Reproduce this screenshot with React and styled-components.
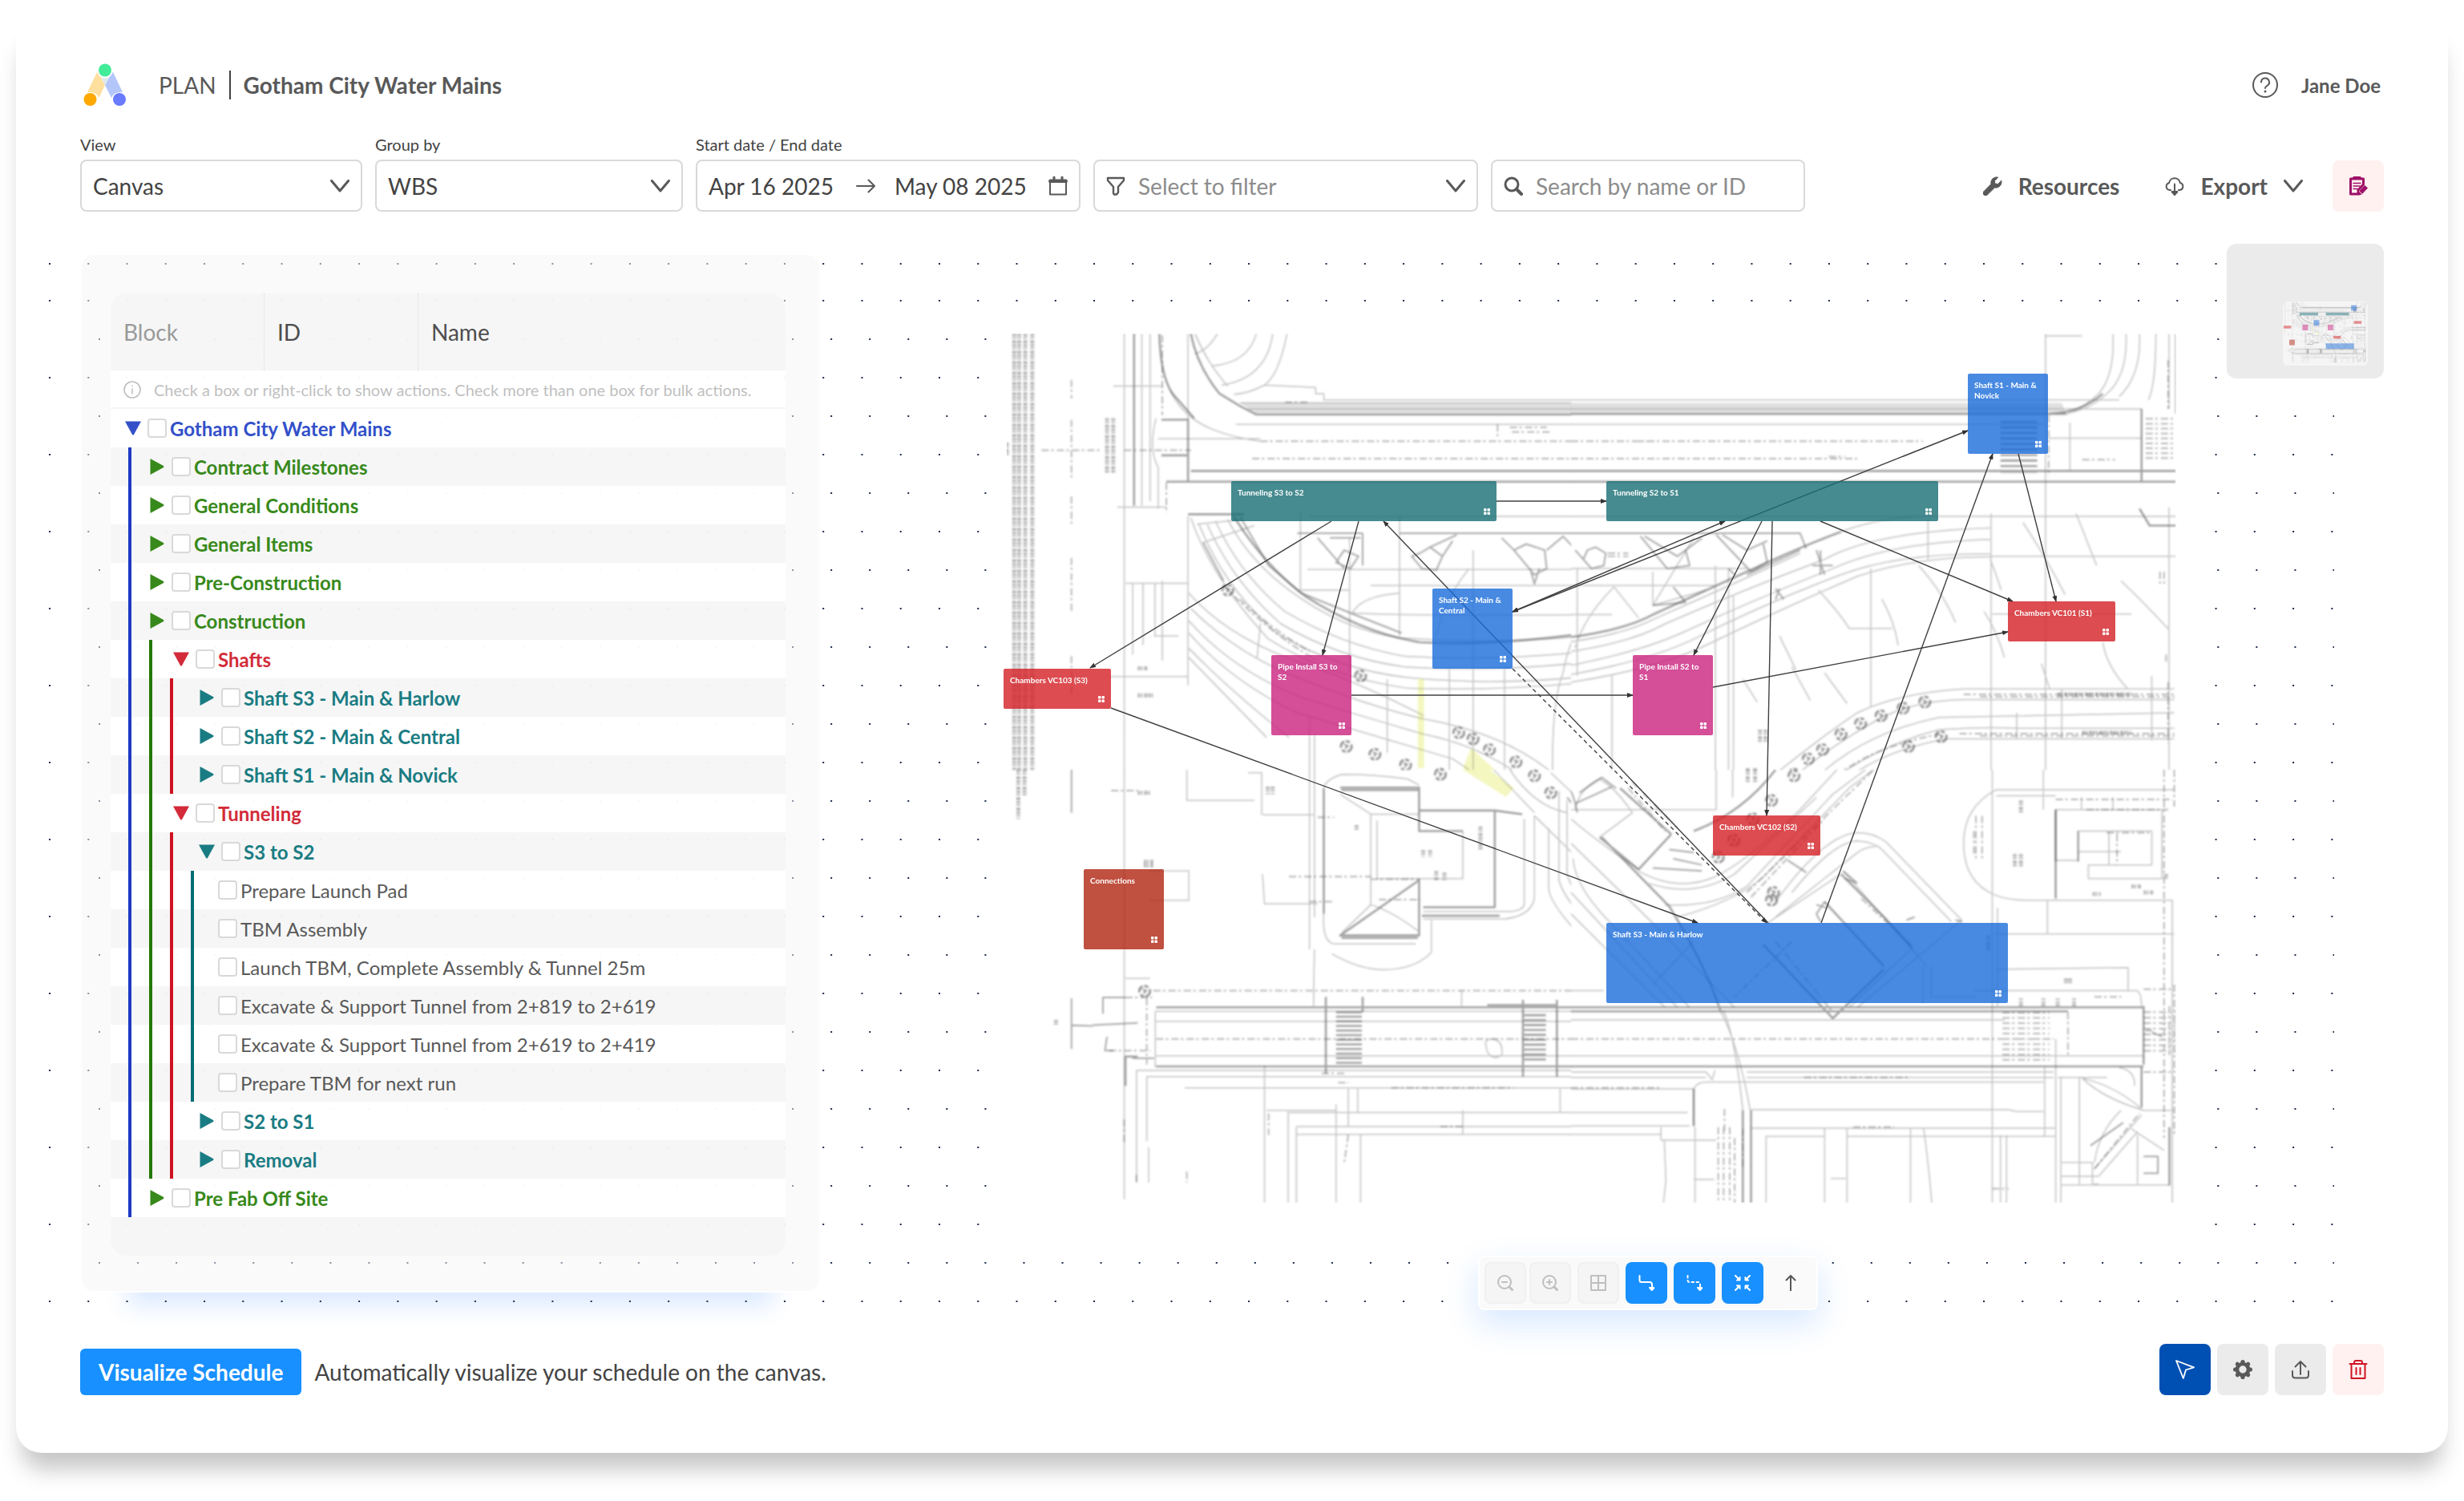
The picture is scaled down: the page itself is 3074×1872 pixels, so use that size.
import React, { useState } from 'react';
import styled, { createGlobalStyle, css } from 'styled-components';

const GlobalStyle = createGlobalStyle`
  * {
    box-sizing: border-box;
  }
  body {
    margin: 0;
    background: #fff;
    color: #434343;
    font-family: Lato, "Open Sans", sans-serif;
  }
  button, input, select {
    font-family: inherit;
    color: inherit;
  }
`;

const Page = styled.div`
  min-height: 100vh;
  padding: 20px 20px 60px;
`;

const Card = styled.main`
  padding: 56px 80px 72px;
  background: #fff;
  border-radius: 32px;
  box-shadow: 0 28px 28px -8px rgba(0, 0, 0, 0.23);
`;

/* ---------- header ---------- */

const Header = styled.header`
  display: flex;
  align-items: center;
  justify-content: space-between;
  height: 60px;
  padding: 0 4px;
`;

const Brand = styled.div`
  display: flex;
  align-items: center;
  color: #595959;
  font-size: 28px;
  line-height: 36px;
`;

const Section = styled.span`
  margin-left: 40px;
  padding-right: 16px;
  border-right: 2px solid #434343;
`;

const ProjectName = styled.h1`
  margin: 0 0 0 16px;
  font-size: inherit;
  font-weight: 700;
`;

const User = styled.div`
  display: flex;
  align-items: center;
  gap: 29px;
  color: #595959;
  font-size: 24px;
  font-weight: 700;
`;

const BareButton = styled.button`
  display: flex;
  padding: 0;
  border: 0;
  background: none;
  cursor: pointer;
`;

/* ---------- filter bar ---------- */

const FilterBar = styled.div`
  display: flex;
  align-items: flex-end;
  gap: 16px;
  margin-top: 32px;
`;

const Field = styled.div`
  flex: 0 1 ${(p) => p.$width}px;
  min-width: 0;
`;

const FieldLabel = styled.label`
  display: block;
  margin-bottom: 7px;
  font-size: 20px;
  line-height: 24px;
`;

const Control = styled.div`
  position: relative;
  display: flex;
  align-items: center;
  gap: 16px;
  height: 65px;
  padding: 0 14px;
  border: 2px solid #d9d9d9;
  border-radius: 8px;
  color: ${(p) => (p.$muted ? '#8c8c8c' : '#434343')};

  svg {
    flex: none;
    color: #595959;
  }
`;

const Select = styled.select`
  flex: 1;
  min-width: 0;
  height: 60px;
  padding: 0;
  border: 0;
  outline: 0;
  appearance: none;
  background: none;
  font-size: 28px;
`;

const TextInput = styled.input`
  flex: ${(p) => (p.$width ? `0 0 ${p.$width}px` : '1')};
  min-width: 0;
  height: 60px;
  padding: 0;
  border: 0;
  outline: 0;
  background: none;
  font-size: 28px;

  &::placeholder {
    color: #8c8c8c;
    opacity: 1;
  }
`;

const RangeArrow = styled.span`
  display: flex;
  margin-right: 8px;
`;

const Actions = styled.div`
  display: flex;
  gap: 17px;
  margin-left: auto;
`;

const GhostButton = styled.button`
  display: flex;
  align-items: center;
  gap: 20px;
  height: 64px;
  padding: 0 20px;
  border: 0;
  background: none;
  color: #595959;
  font-size: 28px;
  font-weight: 700;
  cursor: pointer;
`;

const tones = {
  grey: css`
    background: #ebebeb;
    color: #595959;
  `,
  navy: css`
    background: #0050b3;
    color: #fff;
  `,
  danger: css`
    background: #fff1f0;
    color: #cf1322;
  `,
  plum: css`
    background: #fff1f0;
    color: #9e1068;
  `,
};

const SquareButton = styled.button`
  display: flex;
  align-items: center;
  justify-content: center;
  width: 64px;
  height: 64px;
  padding: 0;
  border: 0;
  border-radius: 8px;
  cursor: pointer;
  ${(p) => tones[p.$tone]}
`;

/* ---------- workspace ---------- */

const Workspace = styled.section`
  position: relative;
  display: flex;
  align-items: flex-start;
  margin-top: 40px;
  padding-bottom: 24px;
`;

const Dots = styled.svg`
  position: absolute;
  top: 0;
  left: -40px;
  width: calc(100% - 22px);
  height: 100%;
`;

const SidePanel = styled.aside`
  position: relative;
  flex: 0 0 924px;
  margin-top: 12px;
  padding: 48px 42px 44px 36px;
  border: 2px solid #fff;
  border-radius: 16px;
  background: rgba(245, 245, 245, 0.5);
  background-clip: padding-box;
  box-shadow: 0 76px 28px -60px rgba(24, 120, 255, 0.16);
`;

const Tree = styled.table`
  width: 100%;
  table-layout: fixed;
  border-spacing: 0;
  overflow: hidden;
  border-radius: 20px;
  background: rgba(255, 255, 255, 0.2);
`;

const HeadCell = styled.th`
  width: ${(p) => (p.$width ? `${p.$width}px` : 'auto')};
  height: 96px;
  padding: 0 16px;
  border-left: ${(p) => (p.$first ? 'none' : '1px dotted #d9d9d9')};
  background: rgba(245, 245, 245, 0.9);
  color: ${(p) => (p.$muted ? '#9a9a9a' : '#4d4d4d')};
  font-size: 28px;
  font-weight: 400;
  text-align: left;
`;

const HintCell = styled.td`
  height: 48px;
  padding: 2px 0 0;
  border-bottom: 2px solid #f5f5f5;
  background: rgba(255, 255, 255, 0.9);
`;

const Hint = styled.div`
  display: flex;
  align-items: center;
  gap: 16px;
  padding-left: 16px;
  color: #bfbfbf;
  font-size: 20px;
  line-height: 24px;
  white-space: nowrap;
`;

const BodyCell = styled.td`
  height: 48px;
  padding: 0;
  background: ${(p) => (p.$odd ? 'rgba(245, 245, 245, 0.9)' : 'rgba(255, 255, 255, 0.9)')};
`;

const TreeRow = styled.div`
  display: flex;
  align-items: center;
  height: 48px;
  color: ${(p) => p.$color};
  font-size: 24px;
  font-weight: ${(p) => (p.$leaf ? 400 : 700)};
  white-space: nowrap;
`;

const Guides = styled.div`
  display: flex;
  flex: none;
  gap: 22px;
  width: ${(p) => p.$width}px;
  height: 100%;
`;

const Guide = styled.span`
  width: 4px;
  background: ${(p) => p.$color};

  &:first-child {
    margin-left: 22px;
  }
`;

const Toggle = styled(BareButton)`
  justify-content: center;
  width: 24px;
  margin-right: 6px;
`;

const Checkbox = styled.input`
  flex: none;
  width: 24px;
  height: 24px;
  margin: 0 4px 0 0;
  border: 2px solid #d9d9d9;
  border-radius: 4px;
  appearance: none;
  background: #fff;

  &:checked {
    border-color: #1890ff;
    background: #1890ff;
  }
`;

/* ---------- canvas ---------- */

const Board = styled.div`
  position: relative;
  display: flex;
  flex: 1;
  align-self: stretch;
  align-items: flex-start;
  justify-content: flex-end;
`;

const Stage = styled.div`
  position: absolute;
  top: 96px;
  left: 214px;
  width: 1514px;
  height: 1150px;
  background: #fff;
`;

const StageLayer = styled.svg`
  position: absolute;
  inset: 0;
  width: 100%;
  height: 100%;
`;

const Block = styled.div`
  position: absolute;
  left: ${(p) => p.$x}px;
  top: ${(p) => p.$y}px;
  display: flex;
  flex-direction: column;
  justify-content: space-between;
  width: ${(p) => p.$w}px;
  height: ${(p) => p.$h}px;
  padding: 8px;
  border-radius: 2px;
  background: ${(p) => p.$fill};
  color: #fff;
  font-size: 10px;
  font-weight: 700;
  line-height: 13px;

  svg {
    align-self: flex-end;
  }
`;

const MiniMap = styled.div`
  position: relative;
  display: flex;
  align-items: flex-end;
  justify-content: flex-end;
  width: 196px;
  height: 168px;
  padding: 16px 20px;
  border-radius: 12px;
  background: #ebebeb;
`;

const MiniView = styled.svg`
  width: 106px;
  height: 80px;
  border-radius: 6px;
  background: #f5f5f5;
`;

const CanvasTools = styled.div`
  position: absolute;
  left: 820px;
  bottom: -22px;
  display: flex;
  gap: 8px;
  padding: 6px;
  border: 2px solid #fff;
  border-radius: 8px;
  background: #fafafa;
  box-shadow: 0 16px 40px rgba(24, 120, 255, 0.18);
`;

const ZoomPair = styled.div`
  display: flex;
  gap: 4px;
`;

const ToolButton = styled.button`
  display: flex;
  align-items: center;
  justify-content: center;
  width: 52px;
  height: 52px;
  padding: 0;
  border: 2px solid transparent;
  border-radius: 8px;
  background: ${(p) => (p.$active ? '#1890ff' : 'transparent')};
  color: ${(p) => (p.$active ? '#fff' : '#595959')};

  &:disabled {
    border-color: #f0f0f0;
    background: #f5f5f5;
    color: #bfbfbf;
  }
`;

/* ---------- footer ---------- */

const Footer = styled.footer`
  display: flex;
  align-items: flex-end;
  justify-content: space-between;
  margin-top: 40px;
`;

const FooterGroup = styled.div`
  display: flex;
  align-items: center;
  gap: ${(p) => p.$gap}px;
  font-size: 28px;
`;

const PrimaryButton = styled.button`
  height: 58px;
  padding: 0 23px;
  border: 0;
  border-radius: 6px;
  background: #1890ff;
  color: #fff;
  font-size: 28px;
  font-weight: 700;
  cursor: pointer;
`;

/* ---------- icons ---------- */

const Icon = ({ size = 24, box = 24, width = 2, children }) => (
  <svg
    width={size}
    height={size}
    viewBox={`0 0 ${box} ${box}`}
    fill="none"
    stroke="currentColor"
    strokeWidth={width}
    strokeLinecap="round"
    strokeLinejoin="round"
    aria-hidden="true"
  >
    {children}
  </svg>
);

const Logo = () => (
  <svg width="54" height="54" viewBox="0 0 54 54" aria-hidden="true">
    <path d="M17.5 10 L27 27 L19.5 43 Q16 35 5 36 Z" fill="#ffdf9e" />
    <path d="M36.500 10 L27 27 L35 43 Q38 35 49 36 Z" fill="#b3c6fa" />
    <path d="M21 16 H33 L27 27 Z" fill="#dfe9ec" />
    <circle cx="27" cy="8.500" r="10" fill="#fff" />
    <circle cx="27" cy="8.500" r="8" fill="#43ec98" />
    <circle cx="8.500" cy="45" r="8" fill="#ffa800" />
    <circle cx="45" cy="45" r="8" fill="#6a7bff" />
  </svg>
);

const Chevron = () => (
  <Icon width={3}>
    <path d="M1.500 5.500 L12 18 L22.500 5.500" />
  </Icon>
);

const HelpIcon = () => (
  <Icon size={32} box={32}>
    <circle cx="16" cy="16" r="15" />
    <path d="M11 12.500 a5 5 0 1 1 7.500 4.300 q-2.500 1.200 -2.500 3.200" />
    <circle cx="16" cy="24" r="1.500" fill="currentColor" stroke="none" />
  </Icon>
);

const ArrowRight = () => (
  <Icon>
    <path d="M1 12 H23 M15.500 4.500 L23 12 L15.500 19.500" />
  </Icon>
);

const CalendarIcon = () => (
  <Icon>
    <path d="M2 4.500 H22 V22.500 H2 Z" />
    <path d="M2 6 H22" strokeWidth="4" />
    <path d="M7 1 V5 M17 1 V5" strokeWidth="3" />
  </Icon>
);

const FunnelIcon = () => (
  <Icon width={2.4}>
    <path d="M2 2 H22 V5 L15 13 V20 L13 22.500 H10 L9 21 V13 L2 5 Z" />
  </Icon>
);

const SearchIcon = () => (
  <Icon width={3}>
    <circle cx="10" cy="10" r="8" />
    <path d="M16 16 L22 22" strokeWidth="4" />
  </Icon>
);

const WrenchIcon = () => (
  <Icon>
    <path
      d="M22.800 5.500 L18.500 9.500 L14.800 9 L14.500 5.500 L18.700 1.200 A7 7 0 0 0 10 9.500 L1 18.700 A3 3 0 0 0 5.300 23 L14.500 14 A7 7 0 0 0 22.800 5.500 Z"
      fill="currentColor"
      strokeWidth="1"
    />
  </Icon>
);

const CloudIcon = () => (
  <Icon>
    <path d="M7 17 H5.500 A4.500 4.500 0 0 1 5 8.200 A7 7 0 0 1 18.800 8 A4.600 4.600 0 0 1 18.500 17 H17" />
    <path d="M12 9.500 V21" />
    <path d="M8.500 19 H15.500 L12 23 Z" fill="currentColor" />
  </Icon>
);

const ClipboardIcon = () => (
  <Icon>
    <path d="M2.500 3 H18.500 V10 L12 17 V22 H2.500 Z" strokeWidth="3" />
    <path d="M7 2 H14" strokeWidth="4" />
    <path d="M6 8.500 H15 M6 12 H14 M6 15.500 H11" strokeWidth="1.600" />
    <path d="M13 19 L20 11.500 L23.500 14.500 L16.500 22 L13 23 Z" fill="currentColor" strokeWidth="1" />
    <path d="M13.200 18.600 L16.800 22" stroke="#fff1f0" strokeWidth="1" />
  </Icon>
);

const InfoIcon = () => (
  <Icon size={22} box={22} width={1.6}>
    <circle cx="11" cy="11" r="10" />
    <path d="M11 10 V16 M11 6 V6.500" />
  </Icon>
);

const ZoomIcon = ({ plus }) => (
  <Icon size={20} box={20}>
    <circle cx="9" cy="9" r="8" />
    <path d={plus ? 'M6 9 H12 M9 6 V12' : 'M6 9 H12'} />
    <path d="M15 15 L18.500 18.500" strokeWidth="3" />
  </Icon>
);

const GridIcon = () => (
  <Icon size={20} box={20}>
    <path d="M1 1 H19 V19 H1 Z M10 1 V19 M1 10 H19" />
  </Icon>
);

const LinkIcon = ({ dashed }) => (
  <Icon size={20} box={20}>
    <path
      d="M1.500 1 V6.500 Q1.500 9 4 9 H14 Q17 9 17 12 V15"
      strokeDasharray={dashed ? '2.500 3.500' : undefined}
    />
    <path d="M14 16 H19.500 L16.800 19 Z" fill="currentColor" />
  </Icon>
);

const CollapseIcon = () => (
  <Icon size={20} box={20}>
    <path d="M1 1 L6 6 M19 1 L14 6 M1 19 L6 14 M19 19 L14 14" />
    <path d="M7 2.500 V7 H2.500 Z M13 2.500 V7 H17.500 Z M7 17.500 V13 H2.500 Z M13 17.500 V13 H17.500 Z" fill="currentColor" strokeWidth="1" />
  </Icon>
);

const ArrowUp = () => (
  <Icon size={20} box={20}>
    <path d="M10 19.500 V1 M4.500 6.500 L10 1 L15.500 6.500" />
  </Icon>
);

const CursorIcon = () => (
  <Icon width={1.8}>
    <path d="M1 1 L23 9.300 L13 12.500 L9.800 23 Z" />
  </Icon>
);

const GearIcon = () => (
  <Icon>
    <circle cx="12" cy="12" r="7" strokeWidth="4.600" />
    {[0, 45, 90, 135, 180, 225, 270, 315].map((a) => (
      <circle key={a} cx="12" cy="2.600" r="2.600" fill="currentColor" stroke="none" transform={`rotate(${a} 12 12)`} />
    ))}
  </Icon>
);

const UploadIcon = () => (
  <Icon>
    <path d="M12 18 V2 M5.500 8.500 L12 2 L18.500 8.500 M2 14 V19 Q2 22.500 5.500 22.500 H18.500 Q22 22.500 22 19 V14" />
  </Icon>
);

const TrashIcon = () => (
  <Icon>
    <path d="M1.500 5 H22.500 M3.500 5 V23 H20.500 V5 M7 5 V3.500 Q7 1 9 1 H15 Q17 1 17 3.500 V5 M9.500 10 V18 M14.500 10 V18" />
  </Icon>
);

const Caret = ({ open }) => (
  <svg width="20" height="20" viewBox="0 0 20 20" fill="currentColor" aria-hidden="true">
    <path d={open ? 'M0 1.500 H20 L11 18 Q10 19 9 18 Z' : 'M1.500 0 L18 9 Q19 10 18 11 L1.500 20 Z'} />
  </svg>
);

const BlockBadge = () => (
  <svg width="8" height="8" viewBox="0 0 8 8" fill="#fff" aria-hidden="true">
    <rect width="3.500" height="3.500" rx="1" />
    <rect x="4.500" width="3.500" height="3.500" rx="1" />
    <rect y="4.500" width="3.500" height="3.500" rx="1" />
    <rect x="4.500" y="4.500" width="3.500" height="3.500" rx="1" />
  </svg>
);

/* ---------- data ---------- */

// one entry per tree level
const guideColors = ['#1d39c4', '#237804', '#cf1322', '#006d75'];
const textColors = ['#3350c9', '#38891b', '#d32b39', '#1a7c83', '#595959'];
const indents = [16, 46, 76, 108, 134];

const rows = [
  { level: 0, name: 'Gotham City Water Mains', open: true },
  { level: 1, name: 'Contract Milestones' },
  { level: 1, name: 'General Conditions' },
  { level: 1, name: 'General Items' },
  { level: 1, name: 'Pre-Construction' },
  { level: 1, name: 'Construction' },
  { level: 2, name: 'Shafts', open: true },
  { level: 3, name: 'Shaft S3 - Main & Harlow' },
  { level: 3, name: 'Shaft S2 - Main & Central' },
  { level: 3, name: 'Shaft S1 - Main & Novick' },
  { level: 2, name: 'Tunneling', open: true },
  { level: 3, name: 'S3 to S2', open: true },
  { level: 4, name: 'Prepare Launch Pad' },
  { level: 4, name: 'TBM Assembly' },
  { level: 4, name: 'Launch TBM, Complete Assembly & Tunnel 25m' },
  { level: 4, name: 'Excavate & Support Tunnel from 2+819 to 2+619' },
  { level: 4, name: 'Excavate & Support Tunnel from 2+619 to 2+419' },
  { level: 4, name: 'Prepare TBM for next run' },
  { level: 3, name: 'S2 to S1' },
  { level: 3, name: 'Removal' },
  { level: 1, name: 'Pre Fab Off Site' },
];

const fills = {
  teal: 'rgba(24, 110, 116, 0.8)',
  blue: 'rgba(26, 109, 219, 0.8)',
  pink: 'rgba(201, 34, 126, 0.8)',
  red: 'rgba(211, 31, 36, 0.8)',
  brick: 'rgba(176, 36, 16, 0.8)',
};

const blocks = [
  { name: 'Tunneling S3 to S2', x: 298, y: 200, w: 331, h: 50, fill: fills.teal },
  { name: 'Tunneling S2 to S1', x: 766, y: 200, w: 414, h: 50, fill: fills.teal },
  { name: 'Shaft S2 - Main & Central', x: 549, y: 334, w: 100, h: 100, fill: fills.blue },
  { name: 'Pipe Install S3 to S2', x: 348, y: 417, w: 100, h: 100, fill: fills.pink },
  { name: 'Chambers VC103 (S3)', x: 14, y: 434, w: 134, h: 50, fill: fills.red },
  { name: 'Shaft S1 - Main & Novick', x: 1217, y: 66, w: 100, h: 100, fill: fills.blue },
  { name: 'Chambers VC101 (S1)', x: 1267, y: 350, w: 134, h: 50, fill: fills.red },
  { name: 'Pipe Install S2 to S1', x: 799, y: 417, w: 100, h: 100, fill: fills.pink },
  { name: 'Chambers VC102 (S2)', x: 899, y: 617, w: 134, h: 50, fill: fills.red },
  { name: 'Shaft S3 - Main & Harlow', x: 766, y: 751, w: 501, h: 100, fill: fills.blue },
  { name: 'Connections', x: 114, y: 684, w: 100, h: 100, fill: fills.brick },
];

const edges = [
  { d: 'M629 225 H766' },
  { d: 'M423 250 L122 433' },
  { d: 'M457 250 L412 417' },
  { d: 'M968 751 L488 250' },
  { d: 'M649 434 L966 751', dashed: true },
  { d: 'M649 363 L914 250', both: true },
  { d: 'M649 363 L1217 137', both: true },
  { d: 'M960 250 L875 417' },
  { d: 'M973 250 L966 617' },
  { d: 'M1033 250 L1273 350' },
  { d: 'M1280 166 L1327 350' },
  { d: 'M1034 751 L1248 166' },
  { d: 'M448 467 H799' },
  { d: 'M899 457 L1267 388' },
  { d: 'M148 483 L880 751' },
];

/* ---------- site plan, drawn one quarter at a time ---------- */

const hatch = (x1, x2, y1, y2, step) => {
  let d = '';
  for (let y = y1; y <= y2; y += step) d += `M${x1} ${y} H${x2} `;
  return d;
};

const plan = [
  {
    id: 'nw',
    at: 'translate(-38 -20)',
    clip: [1490, 1516],
    yellow: 'M1115 1220 H1130 V1510 H1115 Z M1245 1445 L1352 1575 L1330 1605 L1225 1510 Z',
    band: 'M680 320 H1568 V356 H720 Z',
    heavy:
      'M560 95 Q575 200 630 290 L680 330 L720 358 H1568 M560 542 H1568 M500 577 H1568 M553 370 V580 M488 375 H553 M488 491 H553 M553 683 H690 M421 95 V655 M483 95 Q485 230 515 290 L568 370 M665 690 Q740 850 840 950 Q980 1070 1120 1100 Q1300 1115 1568 1063',
    fine:
      'M397 95 V1568 M440 95 V655 M460 95 V640 M553 95 V370 M553 690 V1240 M570 95 Q600 190 650 265 M510 280 Q540 370 620 410 Q670 435 730 445 M625 95 Q600 150 570 160 M720 95 Q700 190 610 200 M760 95 Q745 240 635 262 M795 95 Q775 230 740 262 Q700 290 665 292 M740 262 L865 270 V290 H885 V310 H1568 M680 320 H1568 M700 340 H1568 M670 390 H1568 M480 437 H730 M475 370 Q455 470 480 530 V665 M370 265 H490 M380 660 H500 M850 690 H1568 ' +
      'M650 700 Q700 830 800 930 Q930 1060 1070 1085 Q1300 1110 1568 1075 M620 705 Q680 880 790 1000 Q930 1110 1080 1145 Q1300 1165 1568 1125 M600 715 Q660 900 780 1040 Q920 1150 1080 1180 Q1300 1200 1568 1160 M580 715 Q640 920 770 1070 Q920 1190 1090 1215 Q1330 1245 1568 1205 M560 695 Q610 890 750 1090 Q900 1215 1090 1250 Q1330 1260 1568 1225 M575 715 L690 700 M590 775 L715 720 ' +
      'M555 940 Q660 1100 870 1185 Q1000 1250 1130 1340 M560 990 Q680 1150 850 1230 Q1000 1310 1130 1350 Q1350 1400 1480 1568 M555 1030 Q660 1190 830 1280 Q1000 1350 1130 1400 Q1280 1440 1400 1568 M555 1070 Q660 1230 820 1330 Q1000 1400 1200 1480 L1300 1568 M555 1120 Q650 1250 800 1410 M555 1150 L745 1410 ' +
      'M400 908 H553 M418 908 V1140 M443 908 V1110 M472 908 V1080 M490 900 V1160 M470 1080 H530 M363 1212 H553 M828 680 V930 M948 760 V1200 M1070 690 V1080 M1250 800 V1568 M1500 860 V1100 M1192 1180 V1568 M1327 1180 V1568 M1040 1220 V1460 M845 863 H1568 M1000 915 H1568 M825 930 H948 M955 1005 Q975 950 1070 940 M955 1005 Q1100 1015 1568 1010 M1240 860 Q1180 960 1160 1080 M1568 930 Q1490 1050 1470 1200 Q1440 1300 1445 1568 M730 1040 L722 1150 M850 1340 V1568 M862 1400 V1568',
    scribble:
      'M820 745 H980 M980 745 V850 M1070 745 H1568 M870 760 L935 860 M900 760 H975 M935 800 L915 840 L950 860 L970 820 Z M1100 820 L1125 860 L1160 865 L1175 820 L1145 790 L1120 810 Z M1145 790 L1210 750 M1175 820 L1200 770 M1320 760 L1350 800 L1400 880 L1430 860 L1425 800 L1380 780 L1350 800 M1430 800 L1470 755 L1530 840 L1568 860 M1390 860 L1400 910 L1412 860 M1510 800 L1568 790 M680 690 L750 850 L830 940 M590 775 L640 900 M830 940 L960 1010 L1075 1070',
    dash:
      'M268 245 V305 M268 375 V570 M268 625 V715 M268 825 V1000 M268 1145 V1270 M268 1520 V1568 M195 474 H340 M397 474 H560 M730 445 H1568 M710 502 H1568 M640 915 Q760 1080 870 1160 M680 960 Q760 1060 850 1130 M490 100 V360 M500 580 V680 M790 318 H850 M1310 390 V430 M1340 400 H1430 M1345 415 H1440',
    text: 'M128 95 V1568 M140 95 V1568 M155 95 V1568 M172 95 V1568 M355 370 V550 M370 370 V550 M110 450 V490 M430 1185 H455 M430 1273 H470',
    beads: [[650, 930], [940, 1440], [1010, 1465], [1085, 1500], [1170, 1530], [1215, 1395], [1250, 1415], [1290, 1450], [1355, 1490], [1400, 1535], [975, 1210]],
  },
  {
    id: 'ne',
    at: 'translate(722 -20)',
    clip: [1568, 1516],
    band: 'M0 320 H1200 L1210 356 H0 Z',
    heavy:
      'M0 356 H1210 M0 542 H1478 M0 577 H1478 M1395 340 V575 M1390 665 L1415 720 H1478 M1170 356 Q1250 350 1300 290 M0 1083 Q130 1060 200 1010 Q380 900 430 870 Q560 790 660 740 ' +
      hatch(1050, 1140, 382, 545, 18),
    fine:
      'M1160 95 V1568 M1160 102 H1250 M1325 95 Q1330 230 1290 290 Q1250 340 1210 358 M1357 95 Q1362 230 1310 290 Q1270 340 1220 352 M1390 95 Q1395 230 1340 300 M1430 95 Q1430 260 1412 310 M1462 95 V340 M1478 95 V355 M0 310 H1340 M0 390 H1160 M0 340 H1210 M1168 340 H1395 M1168 435 H1395 M1220 385 V540 M0 690 H1478 M1025 820 H1478 ' +
      'M660 740 Q760 690 880 690 L1025 690 M0 1130 Q150 1100 230 1040 Q420 930 620 830 Q740 740 1025 728 M0 1175 Q170 1130 270 1070 Q450 960 640 860 Q780 775 1025 765 M0 1205 Q190 1160 300 1090 Q480 970 660 880 Q800 810 1025 812 M0 1230 Q200 1190 330 1110 Q500 1000 700 885 Q850 820 1025 822 M0 1098 Q130 1075 210 1020 Q390 915 560 810 ' +
      'M490 1540 Q600 1420 700 1330 Q800 1265 960 1252 H1475 M520 1568 Q620 1450 740 1360 Q830 1290 960 1287 H1475 M580 1568 Q700 1400 900 1345 L1475 1330 M620 1568 Q740 1440 900 1385 Q1000 1375 1090 1380 H1475 M650 1568 Q760 1450 920 1415 H1475 M1027 680 V1568 M1462 660 V1568 M1420 1210 V1420 M1200 1252 V1415 M1090 1330 V1415 M733 860 V1310 M353 850 V1568 M397 950 V1568 M385 860 V1568 M100 1210 V1568 M873 700 V830 ' +
      'M1105 710 Q1160 820 1208 945 M1235 680 L1285 850 M1345 900 Q1400 970 1463 1060 M1300 1100 Q1310 1180 1360 1250 M850 850 Q910 940 940 1035 M605 930 Q660 1010 680 1055 H785 M1010 1000 Q1040 1060 1060 1150 M1150 1170 L1170 1250 M760 960 Q790 1030 800 1110 M510 1080 L550 1190 M620 1200 L675 1300 M540 1180 L585 1290 M420 1220 L455 1295 M1030 1008 H1370 M0 860 H430 M0 915 H350 M15 860 V1210 M0 1010 H100 M105 920 L165 1020 M105 920 Q30 1020 10 1120 M1025 830 Q1040 880 1052 930 M200 980 L300 760 M200 870 V980 L330 930',
    scribble:
      'M0 745 H560 L575 795 M10 800 L50 860 M40 800 L30 830 L50 860 L80 850 L85 810 L60 790 Z M170 755 L235 860 M180 755 L260 820 L320 760 M235 860 L290 850 L280 800 M355 750 L440 870 M370 750 L430 800 L480 770 M400 880 L385 860 M440 870 L480 840 L470 780 M200 980 L280 970 L250 920 M600 800 L620 880 M610 800 V880 M590 850 H640 M500 925 L520 960 M510 925 L500 960 M560 800 L430 880',
    dash:
      'M0 445 H860 M0 502 H700 M1250 505 H1330 M160 445 H190 M630 495 H670 M960 1270 H1475 M1000 1278 H1475 M950 1398 H1475 M1000 1405 H1475 M650 1535 Q740 1440 900 1400 M1168 360 V560 M1460 180 V340 M1460 1230 V1430 M1440 870 V910 M1450 870 V910 M1455 1140 V1170 M90 810 H140 M90 820 H140 ' +
      hatch(1405, 1475, 372, 515, 16),
    text: 'M462 1385 V1425 M476 1385 V1425 M432 1510 V1550 M450 1510 V1550 M1250 1395 H1370 M1190 1270 H1370',
    beads: [[545, 1530], [580, 1480], [615, 1450], [660, 1400], [708, 1365], [758, 1340], [812, 1315], [865, 1295], [825, 1440], [905, 1408]],
  },
  {
    id: 'sw',
    at: 'translate(-38 560)',
    clip: [1490, 1568],
    yellow: 'M1225 0 L1290 0 L1350 60 L1330 88 Z',
    heavy:
      'M925 58 H1118 V200 H1225 M1118 360 V540 H925 Z M928 66 H1118 M1118 133 H1303 V448 H1128 M885 470 V60 M928 548 H1115 M1125 476 H1315 M475 774 H1568 M475 967 H1568 M890 740 V990 M980 740 V790 M1372 750 V1000 M1455 750 V1000 M400 1030 V935 H430 M1285 767 H1455 M1303 133 L1370 145 ' +
      hatch(915, 978, 790, 960, 15) +
      hatch(1375, 1428, 800, 950, 16),
    fine:
      'M397 0 V1400 M735 147 H860 M700 10 H733 V147 M850 0 V585 M862 0 V480 M862 585 L860 770 M735 340 L740 437 H870 M885 60 Q890 30 930 15 Q1010 15 1090 30 L1118 50 M885 470 Q880 560 910 568 H1110 M925 80 L1000 145 V440 L930 530 M1000 440 Q1050 460 1115 525 M1000 145 H1118 M1015 165 V355 H1225 V200 M1375 160 V440 Q1370 460 1340 462 H1128 M1400 150 V420 Q1390 480 1320 487 H1128 M905 600 Q970 650 1030 652 Q1110 650 1148 595 V490 M460 330 H555 V425 H460 ' +
      'M1435 190 V390 Q1440 450 1568 620 M1460 70 V360 Q1470 420 1568 560 M1480 100 V340 Q1490 400 1568 500 M1400 150 L1568 370 M1440 10 L1568 170 M1300 0 L1400 140 M1340 0 Q1400 120 1480 140 M1495 270 Q1510 230 1568 210 M400 680 H460 M550 0 V100 H715 M1222 720 V770 M475 787 H1568 M473 785 V970 M475 820 H1568 M475 932 H1568 M427 1345 V980 H1568 M452 1210 V1000 H1568 M545 1037 H1568 M740 965 V1412 M798 1120 V1412 M818 1165 V1412 M915 1090 V1412 M975 1190 V1412 M945 1040 V1165 M968 1040 V1117 M745 1110 H915 M795 1117 H1568 M818 1163 H1568 M818 1188 H1568 M1463 1040 V1117 M1225 1110 V1190 M1280 890 Q1285 875 1300 878 Q1325 885 1320 930 Q1300 950 1285 920 Z M457 1230 V1345',
    scribble:
      'M345 795 V742 H400 M355 870 L350 915 H370 M270 833 L320 835 M320 832 L430 825 M417 940 H470 M1510 100 L1535 60 L1568 30 M1510 100 L1568 80 M1480 90 L1510 140 M1568 260 L1550 220 M268 0 V140 M268 745 V910',
    dash:
      'M468 720 H1568 M475 877 H1568 M365 68 H430 M800 348 H1000 M1000 357 H1120 M1020 423 H1120 M850 430 H910 M400 742 H465 M360 915 H460 M452 745 V960 M880 990 H940 M920 1020 H945 M397 1140 V1220 M427 1320 V1350 M1050 1037 H1350 M870 155 H910 M945 1190 L935 1280 M1170 1163 H1230 M750 1120 V1190 M550 1310 V1345',
    text: 'M138 0 V160 M153 0 V85 M748 55 V80 M760 55 V80 M445 300 H468 M445 312 H468 M1128 262 V285 M1145 262 V285 M1160 330 V360 M1180 335 V360 M965 180 V200 M1268 185 V260 M230 815 V835 M430 75 H460',
    beads: [[1170, 15], [1400, 20], [1440, 75], [447, 722]],
  },
  {
    id: 'se',
    at: 'translate(722 560)',
    clip: [1568, 1568],
    heavy:
      'M0 774 H1400 M0 787 H1215 M0 967 H1400 M75 220 L240 445 Q330 640 365 785 M70 220 L165 325 L245 210 M120 60 L245 210 M660 340 L765 480 L835 580 M470 570 L640 810 L765 650 M620 430 L765 640 M1400 770 V960 M1395 970 V1100 M1185 130 V420 M420 1110 V1412 M440 1110 V1412 M1463 1165 V1355 M300 1040 V1160 M500 0 Q420 140 300 200',
    fine:
      'M70 220 L150 140 Q110 60 70 30 Q20 60 10 130 H150 M165 330 Q260 400 350 350 Q430 300 560 130 L650 0 M190 370 Q300 420 400 340 L600 90 M230 440 Q350 450 430 380 L640 80 L720 0 M260 480 Q400 430 470 350 L680 60 L740 0 M5 290 Q10 380 90 490 L290 775 M0 400 L260 775 M0 470 L230 775 M0 240 L200 500 L400 775 M0 160 Q60 230 165 325 M0 130 H355 V0 M395 90 V0 ' +
      'M500 430 Q620 210 700 205 Q740 205 770 235 L955 490 M540 400 Q640 235 700 232 Q740 235 760 260 L930 495 M500 480 L700 270 Q720 250 745 250 M665 330 L870 640 M480 500 L660 340 M955 490 L700 775 M835 580 L680 775 M880 640 V740 H990 M860 640 V760 M300 560 L200 700 M365 785 Q410 900 438 1110 M372 785 Q400 860 420 1110 ' +
      'M1475 65 H1040 Q960 120 960 240 Q960 370 1040 410 Q1070 425 1110 425 H1470 V1412 M1030 0 V1412 M1155 0 V130 M1040 85 H1185 M1185 130 H1445 V355 H1265 V310 H1420 V200 H1240 V295 H1185 M1248 90 V130 M1325 90 V130 M1315 200 V310 M1240 267 H1345 M1165 425 V535 M1035 535 H1475 M1045 650 L1362 645 V720 M985 720 H1385 Q1395 730 1395 770 M1043 450 V770 M0 720 H80 M0 815 H1060 M0 932 H1400 M0 985 H330 L345 1010 L352 980 M0 1003 H330 M430 985 H1180 M430 1003 H1180 ' +
      'M0 1040 H300 M0 1117 H285 M0 1161 H290 M0 1188 H220 M300 1165 V1050 Q300 1020 330 1018 H1155 M440 1108 H1070 L1090 1114 H1155 M1158 970 V1195 M440 1168 H1185 M475 1195 H620 M675 1195 H1185 M220 1165 V1207 H355 M228 1207 L232 1340 L226 1412 M303 1165 V1412 M477 1195 V1412 M620 1168 V1412 M675 1168 V1412 M830 1168 V1412 M862 1168 Q875 1290 882 1412 M1050 1190 V1412 M1065 1190 V1412 M1185 877 V1412 M1198 1000 V1412 M1243 1000 V1353 M300 1335 H350 M635 1332 H672 ' +
      'M1198 1353 H1463 M1200 1280 H1275 V1350 H1290 M1200 1325 H1290 M1280 1280 Q1290 1180 1345 1110 M1250 1005 Q1330 1030 1395 1105 M1250 1005 Q1300 1070 1400 1110 H1475 M1280 1300 L1395 1125 M1290 1325 L1385 1180 M1370 1170 L1450 1240 M1385 1190 V1350 M1190 1003 H1310 M1340 970 Q1380 980 1378 1030',
    scribble:
      'M20 75 L75 25 L110 60 M10 110 L60 80 L100 55 M0 70 Q10 100 15 140 M240 260 L300 270 M250 290 L320 310 M200 320 L320 330 M620 430 L600 470 L610 495 M600 440 L625 450 M665 330 L700 370 M700 370 L670 355 M530 295 L575 335 M1185 130 V300 M1240 200 V300 M1420 855 L1445 870 M1405 850 H1420 M1400 1260 H1435 V1315 H1400 M820 490 L840 480 M940 490 L957 495 M1270 1225 L1350 1150',
    dash:
      'M0 877 H1180 M150 40 L260 190 M140 60 L230 200 M430 400 L740 0 M440 415 L620 160 M990 150 V290 M1005 150 V290 M985 200 V280 M1450 0 V1200 M1475 0 V120 M1475 700 V1190 M1463 770 V930 M360 1165 V1412 M373 1165 V1412 M388 1165 V1412 M400 1200 V1412 M1030 1365 H1070 M1185 97 H1470 M1260 130 H1460 M1310 205 H1420 M1335 210 V310 M0 1037 H220 M570 1003 H830 M375 1105 V1180 M1215 790 V930 M1280 740 H1345 M690 1165 H790 M710 420 L830 570 M500 560 L640 790 M540 560 L400 740 M1400 985 H1475 M1400 715 H1475 M420 1170 V1300 M1280 1300 L1390 1120 ' +
      hatch(1055, 1170, 792, 945, 17) +
      hatch(1400, 1478, 790, 930, 18),
    text: 'M1210 680 V698 M1220 680 V698 M432 0 V40 M450 0 V40 M1100 100 V140 M1020 540 V590 M1085 275 V315 M1100 275 V315 M1455 340 V360 M1370 380 H1395 M1400 400 H1425 M1275 405 H1295 M1155 770 V745 M1100 770 V745 M1190 770 V745 M1230 770 V745',
    beads: [[360, 285], [398, 230], [445, 160], [490, 100], [545, 20], [495, 400], [490, 425]],
  },
];

const layers = [
  { key: 'fine', opacity: 0.36, width: 1.5 },
  { key: 'heavy', opacity: 0.55, width: 2.6 },
  { key: 'scribble', opacity: 0.5, width: 2 },
  { key: 'dash', opacity: 0.42, width: 2, dash: '9 3 3 4' },
  { key: 'text', opacity: 0.42, width: 5, dash: '3 1 2 2 4 1' },
];

// the thumbnail scales its strokes down with the drawing, so it starts from wider ones
const SitePlan = ({ name, thumbnail }) => {
  const effect = thumbnail ? undefined : 'non-scaling-stroke';
  const weight = thumbnail ? 4 : 1;
  return plan.map((q) => (
    <g key={q.id} transform={`${q.at} scale(0.5102 0.3827)`} fill="none" stroke="#555" strokeLinejoin="round">
      <clipPath id={`${name}-${q.id}`}>
        <rect width={q.clip[0]} height={q.clip[1]} />
      </clipPath>
      <g clipPath={`url(#${name}-${q.id})`}>
        {q.yellow && <path d={q.yellow} fill="#f0f3a4" fillOpacity="0.7" stroke="none" />}
        {q.band && <path d={q.band} fill="#000" fillOpacity="0.12" stroke="none" />}
        {layers.map((l) => (
          <path
            key={l.key}
            d={q[l.key]}
            vectorEffect={effect}
            strokeOpacity={l.opacity}
            strokeWidth={l.key === 'text' ? l.width : l.width * weight}
            strokeDasharray={l.dash}
          />
        ))}
        {q.beads.map(([x, y]) => (
          <g key={`${x}-${y}`} strokeOpacity="0.6">
            <ellipse cx={x} cy={y} rx="13" ry="17" vectorEffect={effect} strokeWidth="3" strokeDasharray="9 2 5 3" />
            <path d={`M${x - 5} ${y - 6} L${x + 4} ${y - 2} L${x - 3} ${y + 7}`} vectorEffect={effect} strokeWidth="2" />
          </g>
        ))}
      </g>
    </g>
  ));
};

const DotGrid = () => {
  const even = [25];
  const odd = [];
  for (let y = 71; y < 1330; y += 96) even.push(y);
  for (let y = 119; y < 1330; y += 96) odd.push(y);
  return (
    <Dots stroke="#1f2d4d" strokeWidth="2" aria-hidden="true">
      {even.map((y) => (
        <line key={y} x1="1" x2="100%" y1={y} y2={y} strokeDasharray="2 46.260" />
      ))}
      {odd.map((y) => (
        <line key={y} x1="63" x2="100%" y1={y} y2={y} strokeDasharray="2 46.060" />
      ))}
    </Dots>
  );
};

const ScheduleTree = () => {
  const [checked, setChecked] = useState({});
  const toggle = (i) => setChecked({ ...checked, [i]: !checked[i] });

  return (
    <SidePanel>
      <Tree>
        <thead>
          <tr>
            <HeadCell $width={191} $muted $first>Block</HeadCell>
            <HeadCell $width={192}>ID</HeadCell>
            <HeadCell>Name</HeadCell>
          </tr>
          <tr>
            <HintCell colSpan={3}>
              <Hint>
                <InfoIcon />
                Check a box or right-click to show actions. Check more than one box for bulk actions.
              </Hint>
            </HintCell>
          </tr>
        </thead>
        <tbody>
          {rows.map((row, i) => (
            <tr key={row.name}>
              <BodyCell colSpan={3} $odd={i % 2 === 1}>
                <TreeRow $color={textColors[row.level]} $leaf={row.level === 4}>
                  <Guides $width={indents[row.level]}>
                    {guideColors.slice(0, row.level).map((c) => (
                      <Guide key={c} $color={c} />
                    ))}
                  </Guides>
                  {row.level < 4 && (
                    <Toggle aria-label={`Toggle ${row.name}`}>
                      <Caret open={row.open} />
                    </Toggle>
                  )}
                  <Checkbox type="checkbox" id={`row-${i}`} checked={!!checked[i]} onChange={() => toggle(i)} />
                  <label htmlFor={`row-${i}`}>{row.name}</label>
                </TreeRow>
              </BodyCell>
            </tr>
          ))}
          <tr>
            <BodyCell colSpan={3} $odd />
          </tr>
        </tbody>
      </Tree>
    </SidePanel>
  );
};

const Canvas = () => (
  <Board>
    <Stage>
      <StageLayer viewBox="0 0 1514 1150" aria-hidden="true">
        <defs>
          <marker id="tip" viewBox="0 0 8 6" refX="7" refY="3" markerWidth="8" markerHeight="6" orient="auto-start-reverse" markerUnits="userSpaceOnUse">
            <path d="M0 0 L8 3 L0 6 Z" fill="#333" />
          </marker>
          <clipPath id="sheet">
            <rect x="12" y="16" width="1468" height="1084" />
          </clipPath>
          <filter id="scan" x="0" y="0" width="100%" height="100%">
            <feGaussianBlur stdDeviation="0.8" />
          </filter>
        </defs>
        <g clipPath="url(#sheet)">
          <g filter="url(#scan)">
            <SitePlan name="plan" />
          </g>
        </g>
        {edges.map((e) => (
          <path
            key={e.d}
            d={e.d}
            fill="none"
            stroke="#404040"
            strokeWidth="1.400"
            strokeDasharray={e.dashed ? '5 4' : undefined}
            markerEnd="url(#tip)"
            markerStart={e.both ? 'url(#tip)' : undefined}
          />
        ))}
      </StageLayer>
      {blocks.map((b) => (
        <Block key={b.name} $x={b.x} $y={b.y} $w={b.w} $h={b.h} $fill={b.fill}>
          {b.name}
          <BlockBadge />
        </Block>
      ))}
    </Stage>
    <MiniMap>
      <MiniView viewBox="0 0 1514 1150" preserveAspectRatio="none" aria-hidden="true">
        <SitePlan name="mini" thumbnail />
        <g opacity="0.6">
          {blocks.map((b) => (
            <rect key={b.name} x={b.x} y={b.y} width={b.w} height={b.h} fill={b.fill} />
          ))}
        </g>
      </MiniView>
    </MiniMap>
    <CanvasTools>
      <ZoomPair>
        <ToolButton disabled aria-label="Zoom out"><ZoomIcon /></ToolButton>
        <ToolButton disabled aria-label="Zoom in"><ZoomIcon plus /></ToolButton>
      </ZoomPair>
      <ToolButton disabled aria-label="Grid"><GridIcon /></ToolButton>
      <ToolButton $active aria-label="Show links"><LinkIcon /></ToolButton>
      <ToolButton $active aria-label="Show soft links"><LinkIcon dashed /></ToolButton>
      <ToolButton $active aria-label="Collapse"><CollapseIcon /></ToolButton>
      <ToolButton aria-label="Move up"><ArrowUp /></ToolButton>
    </CanvasTools>
  </Board>
);

const App = () => {
  const [start, setStart] = useState('Apr 16 2025');
  const [end, setEnd] = useState('May 08 2025');
  const [search, setSearch] = useState('');

  return (
    <Page>
      <GlobalStyle />
      <Card>
        <Header>
          <Brand>
            <Logo />
            <Section>PLAN</Section>
            <ProjectName>Gotham City Water Mains</ProjectName>
          </Brand>
          <User>
            <BareButton aria-label="Help"><HelpIcon /></BareButton>
            Jane Doe
          </User>
        </Header>

        <FilterBar>
          <Field $width={352}>
            <FieldLabel htmlFor="view">View</FieldLabel>
            <Control>
              <Select id="view"><option>Canvas</option></Select>
              <Chevron />
            </Control>
          </Field>
          <Field $width={384}>
            <FieldLabel htmlFor="group">Group by</FieldLabel>
            <Control>
              <Select id="group"><option>WBS</option></Select>
              <Chevron />
            </Control>
          </Field>
          <Field $width={480}>
            <FieldLabel htmlFor="start">Start date / End date</FieldLabel>
            <Control>
              <TextInput id="start" $width={168} value={start} onChange={(e) => setStart(e.target.value)} />
              <RangeArrow><ArrowRight /></RangeArrow>
              <TextInput aria-label="End date" value={end} onChange={(e) => setEnd(e.target.value)} />
              <CalendarIcon />
            </Control>
          </Field>
          <Field $width={480}>
            <Control $muted>
              <FunnelIcon />
              <Select aria-label="Filter"><option>Select to filter</option></Select>
              <Chevron />
            </Control>
          </Field>
          <Field $width={392}>
            <Control>
              <SearchIcon />
              <TextInput
                aria-label="Search"
                placeholder="Search by name or ID"
                value={search}
                onChange={(e) => setSearch(e.target.value)}
              />
            </Control>
          </Field>
          <Actions>
            <GhostButton><WrenchIcon />Resources</GhostButton>
            <GhostButton><CloudIcon />Export<Chevron /></GhostButton>
            <SquareButton $tone="plum" aria-label="Notes"><ClipboardIcon /></SquareButton>
          </Actions>
        </FilterBar>

        <Workspace>
          <DotGrid />
          <ScheduleTree />
          <Canvas />
        </Workspace>

        <Footer>
          <FooterGroup $gap={16}>
            <PrimaryButton>Visualize Schedule</PrimaryButton>
            <span>Automatically visualize your schedule on the canvas.</span>
          </FooterGroup>
          <FooterGroup $gap={8}>
            <SquareButton $tone="navy" aria-label="Select"><CursorIcon /></SquareButton>
            <SquareButton $tone="grey" aria-label="Settings"><GearIcon /></SquareButton>
            <SquareButton $tone="grey" aria-label="Upload"><UploadIcon /></SquareButton>
            <SquareButton $tone="danger" aria-label="Delete"><TrashIcon /></SquareButton>
          </FooterGroup>
        </Footer>
      </Card>
    </Page>
  );
};

export default App;
